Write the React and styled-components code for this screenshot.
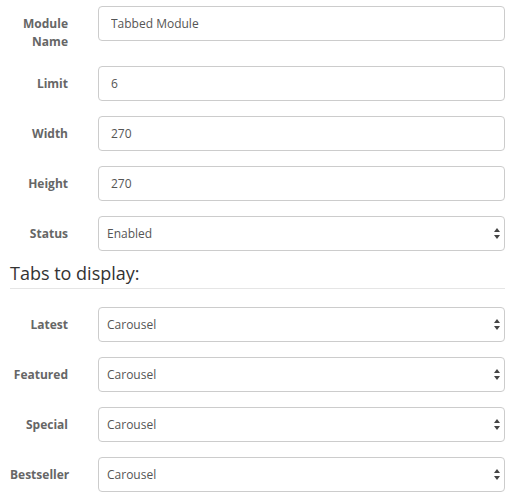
import React from "react";
import styled, { createGlobalStyle } from "styled-components";

const Global = createGlobalStyle`
  html, body { margin: 0; padding: 0; background: #fff; }
  body { font-family: "Open Sans", "Noto Sans", sans-serif; color: #555; }
  * { box-sizing: border-box; }
`;

const Form = styled.form`
  padding: 6px 9px 0 10px;
  width: 514px;
`;

const Group = styled.div`
  display: grid;
  grid-template-columns: 58px 1fr;
  column-gap: 30px;
  margin-bottom: 15px;
`;

const Label = styled.label`
  font-size: 12px;
  font-weight: 700;
  line-height: 18px;
  color: #666;
  text-align: right;
  padding-top: 9px;
  white-space: ${(p) => (p.$multi ? "normal" : "nowrap")};
  display: block;
`;

const Input = styled.input`
  display: block;
  width: 100%;
  height: 35px;
  border: 1px solid #ccc;
  border-radius: 4px;
  padding: 0 12px;
  font-family: "Open Sans", "Noto Sans", sans-serif;
  font-size: 12px;
  color: #555;
  background: #fff;
  outline: none;
`;

const SelectWrap = styled.div`
  position: relative;
`;

const Select = styled.select`
  display: block;
  width: 100%;
  height: 35px;
  border: 1px solid #ccc;
  border-radius: 4px;
  padding: 0 12px 0 8px;
  font-family: "Open Sans", "Noto Sans", sans-serif;
  font-size: 12px;
  color: #555;
  background: #fff;
  appearance: none;
  -webkit-appearance: none;
  outline: none;
`;

const Arrows = styled.svg`
  position: absolute;
  right: 5px;
  top: 12px;
  width: 6px;
  height: 11px;
  pointer-events: none;
`;

const Legend = styled.div`
  font-size: 18px;
  line-height: 27px;
  color: #333;
  margin-top: -6px;
  padding-bottom: 1px;
  border-bottom: 1px solid #e5e5e5;
  margin-bottom: 18px;
`;

function Field({ label, value, multi }) {
  return (
    <Group>
      <Label $multi={multi}>{label}</Label>
      <Input defaultValue={value} />
    </Group>
  );
}

function SelectField({ label, value }) {
  return (
    <Group>
      <Label>{label}</Label>
      <SelectWrap>
        <Select defaultValue={value}>
          <option>{value}</option>
        </Select>
        <Arrows viewBox="0 0 6 11">
          <path d="M3 0 L6 4 L0 4 Z" fill="#444" />
          <path d="M0 7 L6 7 L3 11 Z" fill="#444" />
        </Arrows>
      </SelectWrap>
    </Group>
  );
}

export default function App() {
  return (
    <>
      <Global />
      <Form onSubmit={(e) => e.preventDefault()}>
        <Field label="Module Name" value="Tabbed Module" multi />
        <Field label="Limit" value="6" />
        <Field label="Width" value="270" />
        <Field label="Height" value="270" />
        <SelectField label="Status" value="Enabled" />
        <Legend>Tabs to display:</Legend>
        <SelectField label="Latest" value="Carousel" />
        <SelectField label="Featured" value="Carousel" />
        <SelectField label="Special" value="Carousel" />
        <SelectField label="Bestseller" value="Carousel" />
      </Form>
    </>
  );
}
